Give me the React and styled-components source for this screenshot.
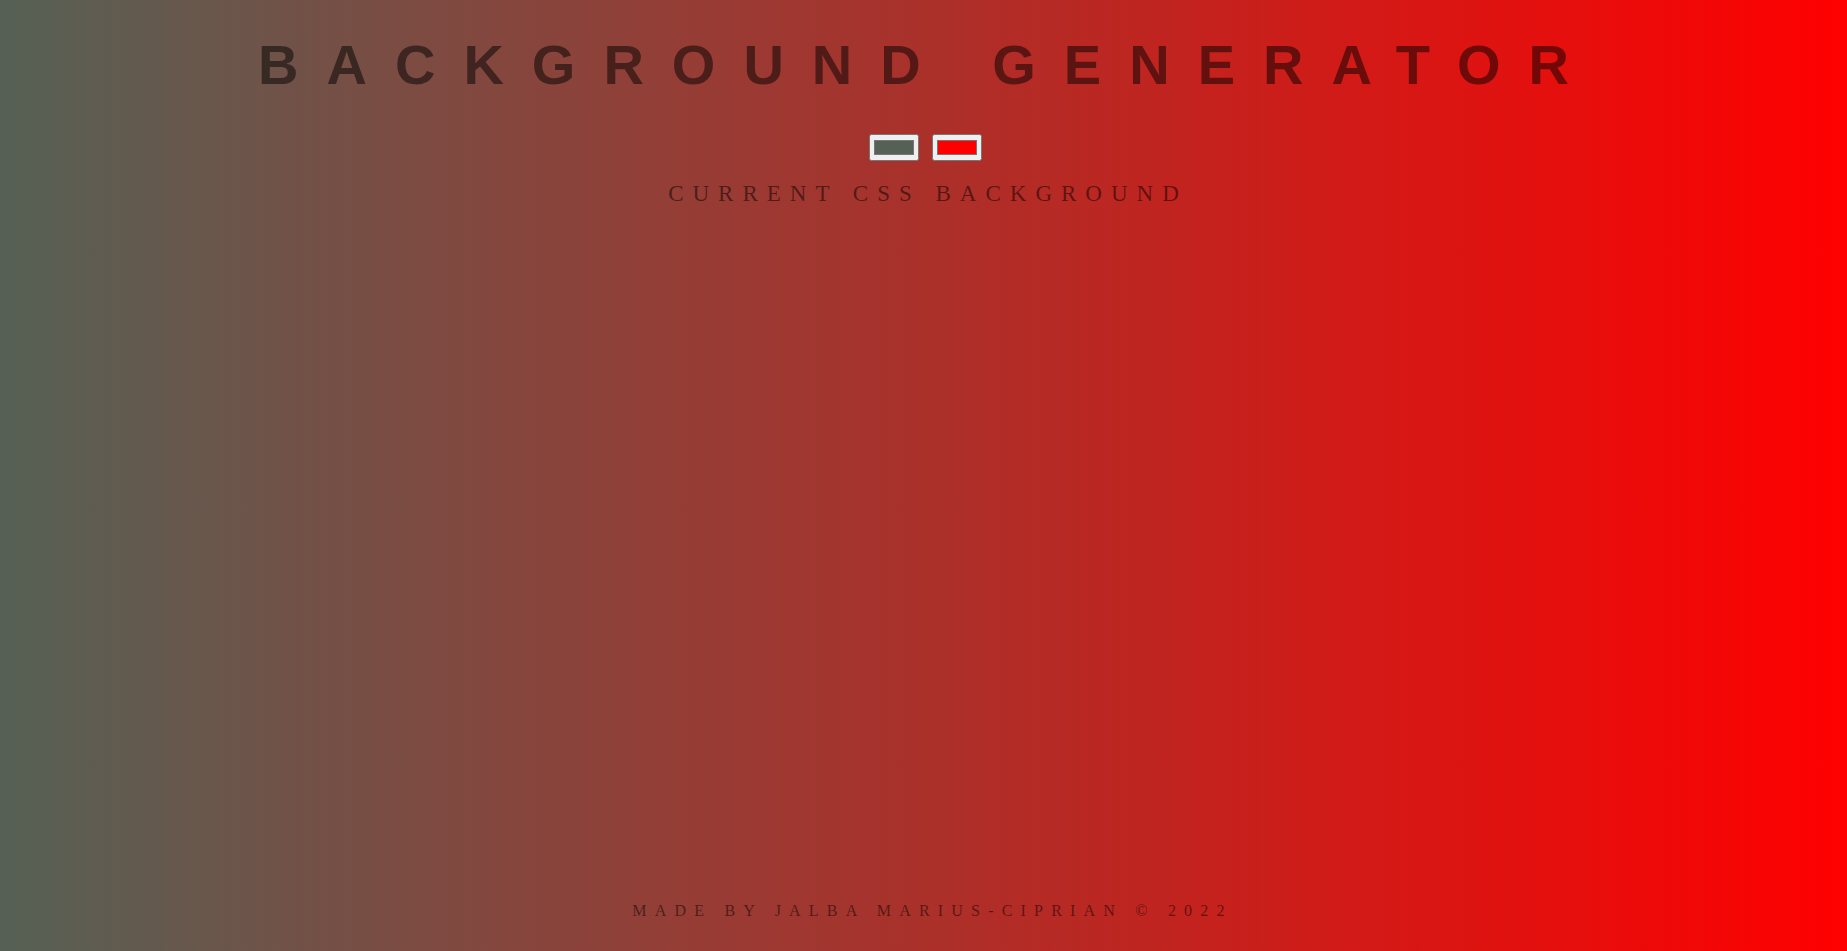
import { useState } from "react";
import styled, { createGlobalStyle } from "styled-components";

const GlobalStyle = createGlobalStyle`
    html, body {
        margin: 0;
        padding: 0;
    }
    body {
        font-family: "Liberation Serif", "Times New Roman", serif;
    }
`;

const Page = styled.div`
    min-height: 100vh;
    box-sizing: border-box;
    display: flex;
    flex-direction: column;
    align-items: center;
    text-align: center;
    text-transform: uppercase;
    color: rgba(0, 0, 0, 0.5);
    padding: 32px 0 31px;
`;

const Title = styled.h1`
    margin: 0;
    font: 700 56px "Liberation Sans", Arial, sans-serif;
    letter-spacing: 0.5em;
    color: rgba(0, 0, 0, 0.5);
    padding-left: 8px;
`;

const Pickers = styled.div`
    display: flex;
    gap: 13px;
    margin: 37px 0 0 4px;
`;

const ColorInput = styled.input`
    width: 50px;
    height: 27px;
    margin: 0;
`;

const Current = styled.h3`
    margin: 20px 0 0;
    font: 400 23px "Liberation Serif", "Times New Roman", serif;
    letter-spacing: 9px;
    padding-left: 9px;
`;

const Footer = styled.footer`
    margin-top: auto;
    font: 400 16px "Liberation Serif", "Times New Roman", serif;
    letter-spacing: 8.2px;
    padding-left: 18px;
`;

const App = () => {
    // 두 색상으로 배경 그라디언트
    const [color1, setColor1] = useState("#566155");
    const [color2, setColor2] = useState("#ff0000");

    return (
        <>
            <GlobalStyle />
            <Page style={{ background: `linear-gradient(to right, ${color1}, ${color2})` }}>
                <Title>Background Generator</Title>
                <Pickers>
                    <ColorInput type="color" value={color1} onChange={(e) => setColor1(e.target.value)} />
                    <ColorInput type="color" value={color2} onChange={(e) => setColor2(e.target.value)} />
                </Pickers>
                <Current>Current CSS Background</Current>
                <Footer>Made by Jalba Marius-Ciprian © 2022</Footer>
            </Page>
        </>
    );
};

export default App;
